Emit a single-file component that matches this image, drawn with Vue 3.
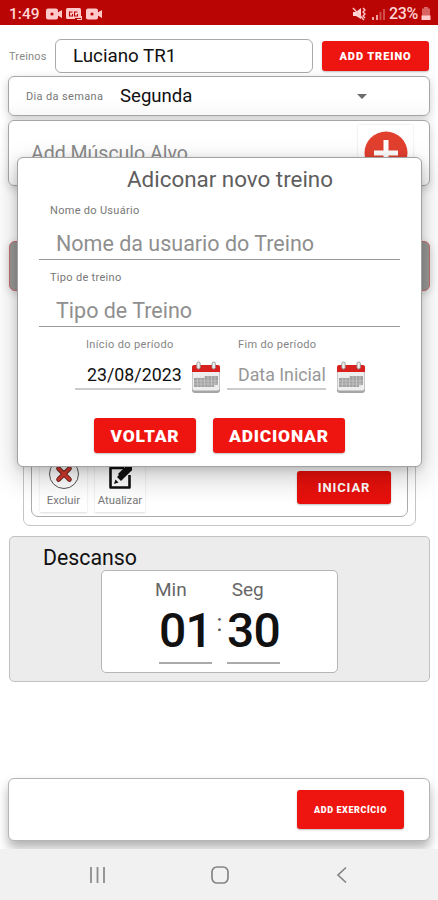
<template>
  <div class="screen">
    <header class="status-bar">
      <span class="clock">1:49</span>
      <svg class="status-icons" width="58" height="14" viewBox="0 0 58 14">
        <g fill="#ffc9c9">
          <rect x="0" y="1.500" width="12" height="11" rx="2" />
          <path d="M11 6l5-3v8l-5-3z" />
          <rect x="20" y="1" width="15" height="11" rx="1.500" />
          <rect x="31" y="9" width="5" height="4" />
          <rect x="40" y="1.500" width="12" height="11" rx="2" />
          <path d="M51 6l5-3v8l-5-3z" />
        </g>
        <g fill="none" stroke="#b90504" stroke-width="1.1">
          <path d="M26.500 5h-3v4h3v-2M31.500 5h-3v4h3v-2M29 11.500h6" />
        </g>
        <circle cx="6" cy="7" r="1.600" fill="#b90504" />
        <circle cx="46" cy="7" r="1.600" fill="#b90504" />
      </svg>
      <svg class="signal-icons" width="34" height="14" viewBox="0 0 34 14">
        <path d="M1 5h3l5-4v11l-5-3H1z" fill="#ffd6d6" />
        <path d="M1 1l11 12M11 1l2 2-2 2 2 2-2 2 2 2" fill="none" stroke="#ffc4c4" stroke-width="1.400" />
        <path d="M20 10h2v3h-2zM24 8h2v5h-2z" fill="#f0a09f" />
        <path d="M27.500 5h2v8h-2zM31 2h2v11h-2z" fill="#d04d4b" />
      </svg>
      <span class="battery-text">23%</span>
      <svg class="battery" width="10" height="13" viewBox="0 0 10 13">
        <path d="M3 0h4v1.500h2V9H1V1.500h2z" fill="#d96461" />
        <path d="M0.500 8.500h9V13h-9z" fill="#ffcaca" />
      </svg>
    </header>

    <main class="content">
      <div class="workout-row">
        <span class="workout-label">Treinos</span>
        <div class="workout-name">Luciano TR1</div>
        <button class="btn btn-add-workout">ADD TREINO</button>
      </div>

      <div class="card weekday-card">
        <span class="weekday-label">Dia da semana</span>
        <span class="weekday-value">Segunda</span>
        <span class="caret"></span>
      </div>

      <div class="card muscle-card">
        <span class="muscle-hint">Add Músculo Alvo</span>
        <div class="plus-tile">
          <svg width="44" height="44" viewBox="0 0 44 44">
            <circle cx="22" cy="22" r="21.500" fill="#e2402f" />
            <path d="M19.500 9h5v10.500H34v5h-9.500V35h-5V24.500H10v-5h9.500z" fill="#fff" />
          </svg>
        </div>
      </div>

      <div class="target-bar"></div>

      <div class="exercise">
        <div class="exercise-inner">
          <div class="tile tile-delete">
            <svg width="32" height="32" viewBox="0 0 32 32">
              <circle cx="16" cy="16" r="14.500" fill="#fff" stroke="#555" stroke-width="1" />
              <path d="M10.500 10.500l11 11M21.500 10.500l-11 11" stroke="#6b2520" stroke-width="4.600" stroke-linecap="round" />
              <path d="M10.500 10.500l11 11M21.500 10.500l-11 11" stroke="#d93a2e" stroke-width="2.800" stroke-linecap="round" />
            </svg>
            <span>Excluir</span>
          </div>
          <div class="tile tile-update">
            <svg width="26" height="32" viewBox="0 0 26 32">
              <path d="M22.500 17v12.500H3.500V10H17" fill="none" stroke="#111" stroke-width="2.600" stroke-linejoin="round" />
              <path d="M10 19L21 8l4 4-11 11z" fill="#111" />
              <path d="M11 16L20 7h5v5l-10 9z" fill="#111" />
              <path d="M8.500 21.500l3 3-4.500 1.500z" fill="#111" />
            </svg>
            <span>Atualizar</span>
          </div>
          <button class="btn btn-start">INICIAR</button>
        </div>
      </div>

      <section class="rest">
        <h2>Descanso</h2>
        <div class="timer">
          <div class="timer-labels">
            <span>Min</span>
            <span>Seg</span>
          </div>
          <div class="timer-values">
            <span class="digits">01</span>
            <span class="colon">:</span>
            <span class="digits">30</span>
          </div>
        </div>
      </section>

      <div class="footer-card">
        <button class="btn btn-exercise">ADD EXERCÍCIO</button>
      </div>
    </main>

    <nav class="nav-bar">
      <svg width="20" height="20" viewBox="0 0 20 20">
        <path d="M4 2v16M10.500 2v16M17 2v16" stroke="#8c8c8c" stroke-width="1.800" />
      </svg>
      <svg width="20" height="20" viewBox="0 0 20 20">
        <rect x="2" y="2" width="16" height="16" rx="5" fill="none" stroke="#858585" stroke-width="1.700" />
      </svg>
      <svg width="20" height="20" viewBox="0 0 20 20">
        <path d="M14 2.500L6 10l8 7.500" fill="none" stroke="#858585" stroke-width="1.700" />
      </svg>
    </nav>

    <div class="dialog">
      <h1>Adiconar novo treino</h1>
      <label class="field-label">Nome do Usuário</label>
      <div class="field">Nome da usuario do Treino</div>
      <label class="field-label">Tipo de treino</label>
      <div class="field">Tipo de Treino</div>

      <div class="dates">
        <div v-for="d in dates" :key="d.label" class="date-group" :class="d.kind">
          <label>{{ d.label }}</label>
          <div class="date-line">
            <div class="date-input">{{ d.text }}</div>
            <svg class="calendar" width="30" height="33" viewBox="0 0 30 33">
              <rect x="1" y="5" width="28" height="27" rx="3" fill="#a5a5a5" />
              <rect x="1.500" y="5" width="27" height="24.500" rx="2" fill="#eeeeee" />
              <path d="M1 11V6q0-2 2-2h24q2 0 2 2v5z" fill="#d8201f" />
              <g fill="#eee" stroke="#8e8e8e" stroke-width="0.900">
                <rect x="5.800" y="1" width="3.400" height="7" rx="1.700" />
                <rect x="21" y="1" width="3.400" height="7" rx="1.700" />
              </g>
              <path d="M3 17h11v-2h13v9h-4v2H3z" fill="#a2a2a2" />
              <path d="M3 20h24M3 23h24M6.500 16v10M10 16v10M13.500 15v11M17 15v11M20.500 15v11M24 15v11" stroke="#ccc" stroke-width="0.700" />
            </svg>
          </div>
        </div>
      </div>

      <div class="actions">
        <button class="btn btn-back">VOLTAR</button>
        <button class="btn btn-confirm">ADICIONAR</button>
      </div>
    </div>
  </div>
</template>

<script setup>
const dates = [
  { label: 'Início do período', text: '23/08/2023', kind: 'start' },
  { label: 'Fim do período', text: 'Data Inicial', kind: 'end' }
]
</script>

<style>
body {
  margin: 0;
}
</style>

<style scoped>
.screen {
  position: relative;
  display: flex;
  flex-direction: column;
  width: 438px;
  height: 900px;
  overflow: hidden;
  background: #fff;
  font-family: Roboto, sans-serif;
  color: #111;
}

.screen * {
  box-sizing: border-box;
}

.status-bar {
  display: flex;
  align-items: center;
  height: 25px;
  flex: none;
  padding: 2px 7px 0 9px;
  background: #b90504;
  color: #ffd5d5;
  font-size: 16px;
}

.clock {
  width: 31px;
  font-weight: 500;
  font-size: 15.5px;
}

.status-icons {
  margin-left: 6px;
}

.signal-icons {
  margin-left: auto;
}

.battery-text {
  margin-left: 3px;
  width: 32px;
  font-size: 16px;
  font-weight: 500;
  letter-spacing: -0.4px;
}

.battery {
  flex: none;
}

.content {
  display: flex;
  flex-direction: column;
  height: 824px;
  flex: none;
  padding: 14px 8px 0;
  overflow: hidden;
}

.btn {
  border: 0;
  padding: 0;
  border-radius: 3px;
  background: #ee1510;
  color: #fff;
  font-family: Roboto, sans-serif;
  font-weight: 700;
  white-space: nowrap;
  box-shadow: 0 1px 2px rgba(0, 0, 0, 0.25);
}

.workout-row {
  display: flex;
  align-items: center;
  height: 34px;
  flex: none;
}

.workout-label {
  width: 47px;
  padding-left: 1px;
  font-size: 11px;
  letter-spacing: 0.2px;
  color: #888;
}

.workout-name {
  width: 258px;
  height: 34px;
  padding-left: 17px;
  border: 1px solid #aaa;
  border-radius: 6px;
  font-size: 18.8px;
  line-height: 33px;
}

.btn-add-workout {
  width: 107px;
  height: 30px;
  margin-left: 9px;
  font-size: 11px;
  font-weight: 900;
  letter-spacing: 0.9px;
}

.card {
  display: flex;
  align-items: center;
  flex: none;
  border: 1px solid #a6a6a6;
  border-radius: 6px;
  background: linear-gradient(#fff 60%, #f8f8f8);
  box-shadow: 0 3px 10px rgba(0, 0, 0, 0.2);
}

.weekday-card {
  height: 40px;
  margin-top: 3px;
  padding: 0 62px 0 17px;
}

.weekday-label {
  width: 94px;
  font-size: 11px;
  letter-spacing: 0.35px;
  color: #777;
}

.weekday-value {
  font-size: 18.6px;
}

.caret {
  margin-left: auto;
  border: 5px solid transparent;
  border-top-color: #6c6c6c;
  border-bottom: 0;
}

.muscle-card {
  height: 66px;
  margin-top: 4px;
  padding: 0 16px 0 22px;
  justify-content: space-between;
}

.muscle-hint {
  font-size: 19.5px;
  color: #8a8a8a;
}

.plus-tile {
  display: grid;
  place-items: center;
  width: 55px;
  height: 56px;
  background: #fff;
  box-shadow: 0 0 2px rgba(0, 0, 0, 0.15);
}

.target-bar {
  height: 50px;
  margin: 55px 0 0 1px;
  flex: none;
  border: 1px solid #c96b6d;
  border-radius: 6px;
  background: #9a9a98;
  box-shadow: 0 2px 8px rgba(0, 0, 0, 0.2);
}

.exercise {
  height: 126px;
  margin: 109px 14px 0 15px;
  padding: 0 7px 8px;
  flex: none;
  border: 1px solid #c5c5c5;
  border-radius: 7px;
}

.exercise-inner {
  display: flex;
  align-items: flex-end;
  height: 100%;
  padding: 0 16px 4px 8px;
  border: 1px solid #ababab;
  border-radius: 7px;
}

.tile {
  display: flex;
  flex-direction: column;
  align-items: center;
  height: 54px;
  font-size: 11px;
  color: #777;
  background: #fff;
  box-shadow: 0 1px 2px rgba(0, 0, 0, 0.15);
}

.tile svg {
  flex: none;
}

.tile span {
  margin-top: 4px;
  font-size: 11.3px;
}

.tile-delete {
  width: 47px;
}

.tile-update {
  width: 50px;
  margin-left: 8px;
}

.btn-start {
  width: 94px;
  height: 33px;
  margin: 0 0 8px auto;
  font-size: 13px;
  letter-spacing: 0.9px;
  background: #e7100c;
}

.rest {
  height: 146px;
  margin: 10px 0 0 1px;
  padding: 8px 0 0 33px;
  flex: none;
  border: 1px solid #c1c1c1;
  border-radius: 5px;
  background: #ececec;
}

.rest h2 {
  margin: 0;
  font-size: 21.3px;
  line-height: 25px;
  font-weight: 400;
}

.timer {
  width: 237px;
  height: 103px;
  margin: 0 0 0 58px;
  padding-top: 7px;
  border: 1px solid #b5b5b5;
  border-radius: 5px;
  background: #fff;
}

.timer-labels {
  display: flex;
  gap: 45px;
  padding-left: 53px;
  font-size: 19px;
  line-height: 24px;
  color: #666;
}

.timer-values {
  display: flex;
  padding-left: 57px;
}

.digits {
  width: 53px;
  height: 62px;
  border-bottom: 2px solid #aaa;
  font-size: 48px;
  line-height: 57px;
  font-weight: 500;
  letter-spacing: -0.7px;
  text-align: center;
}

.colon {
  width: 15px;
  font-size: 24px;
  line-height: 42px;
  text-align: center;
  color: #555;
}

.footer-card {
  display: flex;
  align-items: center;
  justify-content: flex-end;
  height: 63px;
  margin-top: 96px;
  padding-right: 25px;
  flex: none;
  border: 1px solid #b5b5b5;
  border-radius: 6px;
  background: #fff;
  box-shadow: 0 7px 11px rgba(0, 0, 0, 0.3);
}

.btn-exercise {
  width: 107px;
  height: 39px;
  font-size: 9px;
  font-weight: 900;
  letter-spacing: 0.6px;
}

.nav-bar {
  display: flex;
  align-items: center;
  justify-content: space-between;
  height: 51px;
  flex: none;
  padding: 0 86px 0 87px;
  background: #f1f1f1;
}

.dialog {
  position: absolute;
  top: 157px;
  left: 17px;
  width: 405px;
  height: 310px;
  border: 1px solid #a2a2a2;
  border-radius: 6px;
  background: #fff;
  box-shadow: 0 10px 28px rgba(0, 0, 0, 0.22), 0 2px 8px rgba(0, 0, 0, 0.14);
}

.dialog h1 {
  margin: 7px 0 0;
  padding-left: 21px;
  font-size: 22.4px;
  line-height: 28px;
  font-weight: 400;
  text-align: center;
  color: #5e5e5e;
}

.field-label {
  display: block;
  height: 16px;
  margin: 10px 0 0 32px;
  font-size: 11px;
  line-height: 16px;
  letter-spacing: 0.3px;
  color: #777;
}

.field {
  height: 41px;
  margin: 0 21px;
  padding-left: 17px;
  border-bottom: 1px solid #999;
  font-size: 21.5px;
  line-height: 50px;
  color: #8f8f8f;
}

.dates {
  display: flex;
  padding: 8px 0 0 57px;
}

.date-group {
  width: 152px;
}

.date-group.end {
  width: 144px;
}

.date-group label {
  display: block;
  margin-left: 11px;
  font-size: 11px;
  line-height: 20px;
  letter-spacing: 0.35px;
  color: #858585;
}

.date-line {
  display: flex;
}

.date-input {
  width: 106px;
  height: 35px;
  padding-left: 12px;
  border-bottom: 2px solid #ccc;
  font-size: 17.8px;
  line-height: 39px;
  white-space: nowrap;
}

.end .date-input {
  width: 99px;
  padding-left: 11px;
  color: #979797;
}

.calendar {
  flex: none;
  margin: 6px 0 0 10px;
}

.actions {
  display: flex;
  gap: 17px;
  padding: 24px 0 0 76px;
}

.actions .btn {
  height: 35px;
  font-size: 17.4px;
  font-weight: 900;
  letter-spacing: 0.8px;
}

.btn-back {
  width: 102px;
}

.btn-confirm {
  width: 132px;
}
</style>
